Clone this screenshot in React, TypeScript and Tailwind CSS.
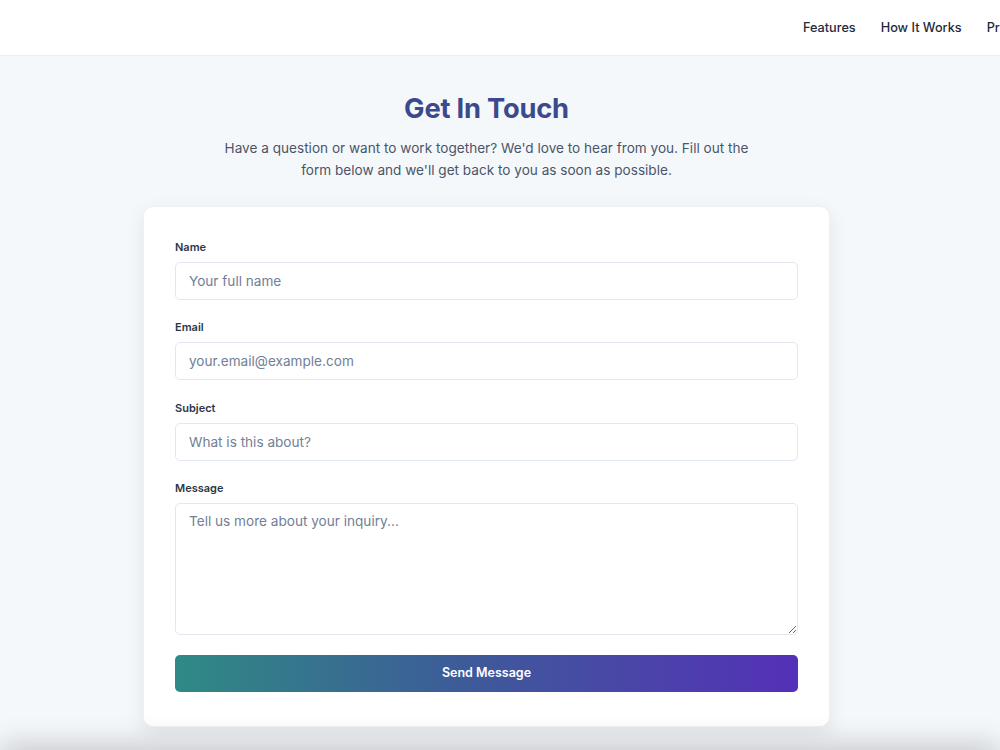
import React from "react";

export default function App() {
  const font = { fontFamily: "Inter, 'Noto Sans', sans-serif" };
  const inputCls =
    "w-full h-[38px] rounded-[5px] border border-[#e2e8f0] bg-white px-[13px] text-[13.6px] text-[#2d3748] placeholder:text-[#718096] outline-none";
  const labelCls = "block text-[11px] leading-[15px] font-semibold text-[#2d3748] mb-[7px]";
  return (
    <div style={font} className="min-h-screen bg-[#f5f8fb] flex flex-col overflow-hidden">
      <header className="h-[56px] bg-white border-b border-[#edf0f3] flex items-center shrink-0">
        <nav className="flex items-center gap-[25px] pl-[803px] whitespace-nowrap text-[12.7px] font-medium text-[#1f2937]">
          <a>Features</a>
          <a>How It Works</a>
          <a>Pricing</a>
        </nav>
      </header>
      <main className="flex flex-col items-center pr-[27px] pt-[36px] pb-[26px]">
        <h1 className="text-[27.3px] leading-[34px] font-bold text-[#3a4a8c] tracking-[-0.2px]">Get In Touch</h1>
        <p className="mt-[11px] w-[530px] text-center text-[13.6px] leading-[22px] text-[#4a5568]">
          Have a question or want to work together? We'd love to hear from you. Fill out the form below and we'll get back to you as soon as possible.
        </p>
        <form className="mt-[25px] w-[687px] bg-white rounded-[10px] border border-[#eef1f4] shadow-[0_6px_20px_rgba(0,0,0,0.08)] px-[31px] pt-[33px] pb-[34px] flex flex-col gap-[20px]">
          <div>
            <label className={labelCls}>Name</label>
            <input className={inputCls} placeholder="Your full name" />
          </div>
          <div>
            <label className={labelCls}>Email</label>
            <input className={inputCls} placeholder="your.email@example.com" />
          </div>
          <div className="pt-[1px]">
            <label className={labelCls}>Subject</label>
            <input className={inputCls} placeholder="What is this about?" />
          </div>
          <div>
            <label className={labelCls}>Message</label>
            <textarea
              className="w-full h-[132px] block rounded-[5px] border border-[#e2e8f0] bg-white px-[13px] py-[7px] text-[13.6px] leading-[20px] text-[#2d3748] placeholder:text-[#718096] outline-none"
              placeholder="Tell us more about your inquiry..."
            />
          </div>
          <button
            type="button"
            className="h-[37px] w-full rounded-[5px] bg-[linear-gradient(to_right,#2f8a84,#3d5c98_45%,#5530b8)] text-white text-[12.5px] font-semibold"
          >
            Send Message
          </button>
        </form>
      </main>
      <footer className="h-[200px] bg-[#1f2937] shadow-[0_-8px_28px_rgba(0,0,0,0.2)] shrink-0" />
    </div>
  );
}
